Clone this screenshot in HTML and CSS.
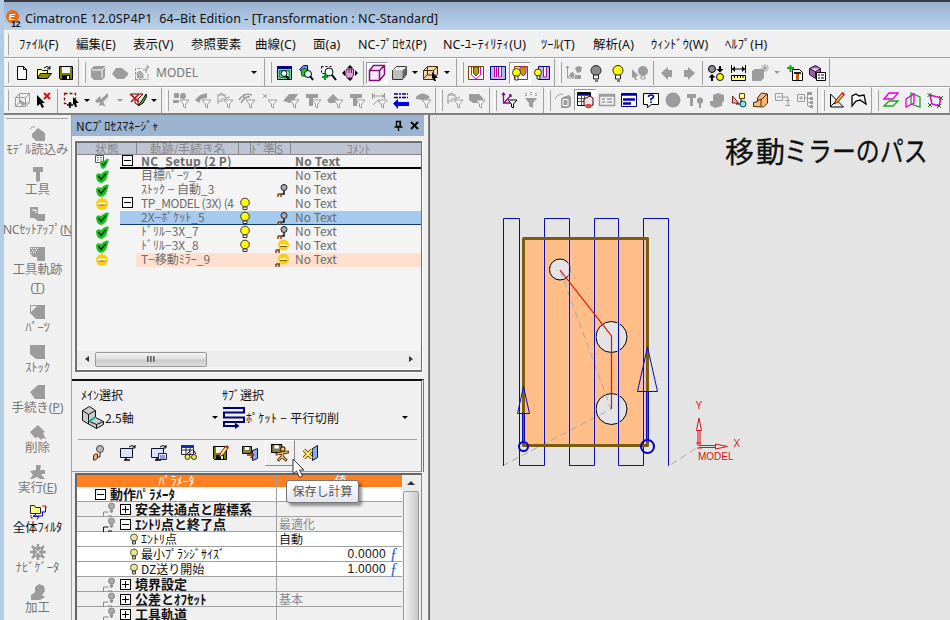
FILE: index.html
```html
<!DOCTYPE html>
<html lang="ja">
<head>
<meta charset="utf-8">
<title>CimatronE 12.0SP4P1</title>
<link rel="stylesheet" href="styles.css">
</head>
<body>
<svg class="sprite" aria-hidden="true">
<defs>
<g id="funnel"><path d="M8 9h9l-3.500 4v4l-2-1v-3z" fill="#fafafa" stroke="#9c9c9c"/></g>
<symbol id="new" viewBox="0 0 18 18"><path d="M4.500 2.500h6l3 3v10h-9zM10.500 2.500v3h3" fill="#fff" stroke="#000"/></symbol>
<symbol id="open" viewBox="0 0 18 18"><path d="M2.500 14.500v-9h4l1 1h5v3" fill="#ffff9c" stroke="#000"/><path d="M2.500 14.500l3-5h11l-4 5z" fill="#8c8c00" stroke="#000"/><path d="M9 4q3-3 6 0m0-2v3h-3" fill="none" stroke="#000"/></symbol>
<symbol id="save" viewBox="0 0 18 18"><path d="M2.500 2.500h13v13h-12l-1-1z" fill="#808000" stroke="#000"/><path d="M5 3h8v6H5z" fill="#f4f4f4"/><path d="M5 11h8v4H5z" fill="#000"/><path d="M10 12h2v3h-2z" fill="#fff"/></symbol>
<symbol id="gbox" viewBox="0 0 18 18"><path d="M2 5l3-3h11v11l-3 3H5l-3-3z" fill="#9c9c9c"/><path d="M6 6h7v8M13 6l3-3M6 6H3" stroke="#fff" fill="none"/></symbol>
<symbol id="ghex" viewBox="0 0 18 18"><path d="M1 10l4-6h6l6 5v2l-4 4H6z" fill="#9c9c9c"/></symbol>
<symbol id="gframe" viewBox="0 0 18 18"><path d="M2.500 15V4.500H9M2 15.500h13V10" stroke="#9c9c9c" fill="none" stroke-dasharray="3 1"/><path d="M4 9l3-2 3 3v4H5zM10 6h5M13 3v6M14 1l2 2-2 2" stroke="#9c9c9c" fill="#b0b0b0"/></symbol>
<symbol id="zwin" viewBox="0 0 18 18"><path d="M2.500 2.500h14v13h-14z" fill="#fff" stroke="#000080"/><path d="M2 2h15v3H2z" fill="#000080"/><path d="M4.500 6.500h10v7h-10z" fill="none" stroke="#00a050" stroke-width="2"/><circle cx="9" cy="9.500" r="3" fill="#dff" stroke="#000"/><path d="M11 12l3 3" stroke="#000" stroke-width="2"/></symbol>
<symbol id="zobj" viewBox="0 0 18 18"><path d="M2.500 5.500l4-4h4v6h-6z" fill="#8888ff" stroke="#000080"/><path d="M4 6l4-2 4 4-3 4H5z" fill="#20d020" stroke="#006000"/><circle cx="11" cy="10" r="3.500" fill="#dff" stroke="#000"/><path d="M13 12l3 4" stroke="#000" stroke-width="2"/></symbol>
<symbol id="zplus" viewBox="0 0 18 18"><path d="M2.500 2.500h10v7h-10z" fill="none" stroke="#000" stroke-dasharray="2 2"/><circle cx="10" cy="8" r="4" fill="#eff" stroke="#000"/><path d="M13 11l4 5" stroke="#000" stroke-width="2"/><path d="M3 13h6M6 10v6" stroke="#00a020" stroke-width="2"/></symbol>
<symbol id="pan" viewBox="0 0 18 18"><path d="M9 1l3 3H6zM9 17l3-3H6zM1 9l3-3v6zM17 9l-3-3v6z" fill="#000"/><path d="M5.500 5h7v6l-2 3h-4l-2-3z" fill="#e6a0d8" stroke="#602060"/><path d="M8 4v5M10.500 4v5" stroke="#602060"/></symbol>
<symbol id="cubew" viewBox="0 0 18 18"><path d="M1.500 6.500l4-5h11v9l-5 6h-10zM1.500 6.500h10v10M11.500 6.500l5-5" fill="#ffe8ff" stroke="#7c1080" stroke-width="1.500"/></symbol>
<symbol id="cubeg" viewBox="0 0 18 18"><path d="M2.500 6.500l4-4h10v8l-4 5h-10z" fill="#bdbdbd" stroke="#333"/><path d="M3 6l4-3h9l-4 3z" fill="#eee"/><path d="M12.500 7v8l4-5V3z" fill="#666"/></symbol>
<symbol id="cubeo" viewBox="0 0 18 18"><path d="M1.500 6.500l4-4h10v8l-4 5h-10zM1.500 6.500h10v9M11.500 6.500l4-4M5.500 3v8h9M5 11l-4 4" fill="#f5d8b0" stroke="#4c2800"/><path d="M10 8l6 6h-3l1 3-2 0-1-3-1 1z" fill="#000"/></symbol>
<symbol id="tool1" viewBox="0 0 18 18"><path d="M1.500 2.500h15v13h-15z" fill="#fff" stroke="#804000"/><path d="M4.500 3v8l4.500 4 4.500-4V3" fill="none" stroke="#e000e0"/><path d="M6.500 3h5v6l-2.500 3-2.500-3z" fill="#b8a000" stroke="#504000"/></symbol>
<symbol id="tool2" viewBox="0 0 18 18"><path d="M1.500 2.500h15v13h-15z" fill="#b8b8ff" stroke="#000080"/><path d="M5 3h8v11H5z" fill="#fff"/><path d="M5.500 3v10h2V3M9.500 3v10h3V3" fill="none" stroke="#c000a0"/></symbol>
<symbol id="tool3" viewBox="0 0 18 18"><path d="M3.500 2.500h13v13h-13z" fill="#fff" stroke="#804000"/><path d="M9 3v6l3 3 3-3V3z" fill="#b8a000" stroke="#e000e0"/><circle cx="5.500" cy="8.500" r="4" fill="#ff0" stroke="#333"/><path d="M4 12h3v4H4z" fill="#fff" stroke="#333"/></symbol>
<symbol id="tool4" viewBox="0 0 18 18"><path d="M5.500 2.500h11v13h-11z" fill="#b8b8ff" stroke="#000080"/><path d="M10.500 3v10h3V3" fill="#fff" stroke="#c000a0"/><circle cx="5" cy="8.500" r="3.500" fill="#ff0" stroke="#333"/><path d="M4 12h3v3H4z" fill="#fff" stroke="#333"/></symbol>
<symbol id="gaxis" viewBox="0 0 18 18"><path d="M2.500 2v12h9M1 4l1.500-2L4 4M3 13l5-5" stroke="#9c9c9c" fill="none"/><path d="M10 4l3-2 4 1-1 5-4 1z" fill="#9c9c9c"/><circle cx="7" cy="11" r="2.500" fill="#9c9c9c"/><path d="M10 11h6v4h-6z" fill="#9c9c9c"/></symbol>
<symbol id="bulbg" viewBox="0 0 18 18"><circle cx="9" cy="6.500" r="5" fill="#8c8c8c" stroke="#222"/><path d="M6.500 11h5v4h-5z" fill="#eee" stroke="#222"/><path d="M8 17h3" stroke="#000"/></symbol>
<symbol id="bulby" viewBox="0 0 18 18"><circle cx="9" cy="6.500" r="5" fill="#ff0" stroke="#222"/><path d="M6.500 11h5v4h-5z" fill="#fff" stroke="#222"/><path d="M8 17h3" stroke="#000"/></symbol>
<symbol id="gbulbs" viewBox="0 0 18 18"><circle cx="12" cy="7" r="5" fill="#9c9c9c"/><path d="M10 12h4v3h-4z" fill="none" stroke="#9c9c9c"/><path d="M1 5l7 7H5l1 4-2 0-1-3-2 1z" fill="#9c9c9c"/></symbol>
<symbol id="gleft" viewBox="0 0 18 18"><path d="M3 9l7-6v3h4v7h-4v3z" fill="#9c9c9c"/></symbol>
<symbol id="gright" viewBox="0 0 18 18"><path d="M15 9L8 3v3H4v7h4v3z" fill="#9c9c9c"/></symbol>
<symbol id="swap" viewBox="0 0 18 18"><circle cx="5" cy="5" r="3.500" fill="#909090" stroke="#000"/><circle cx="13" cy="13" r="3.500" fill="#ff0" stroke="#000"/><path d="M13 2v3M5 13v4" stroke="#000" stroke-width="2"/><path d="M9.500 5h7L13 8.500zM1.500 13.500h7L5 10z" fill="#000"/></symbol>
<symbol id="ruler" viewBox="0 0 18 18"><path d="M2.500 1v8M16.500 1v8M3 5h13" stroke="#000"/><path d="M3 5l3-3v6zM16 5l-3-3v6z" fill="#000"/><path d="M2.500 11.500h14v5h-14z" fill="#ff8" stroke="#000"/><path d="M5.500 12v2M8.500 12v2M11.500 12v2M14 12v2" stroke="#000"/></symbol>
<symbol id="gburst" viewBox="0 0 18 18"><path d="M1 7l3-2h9v9l-3 3H1z" fill="#9c9c9c"/><path d="M11 1l6 6M17 1l-6 6M14 0v8M10 4h8" stroke="#9c9c9c"/></symbol>
<symbol id="addt" viewBox="0 0 18 18"><path d="M6.500 5.500h7l3 3v8h-10z" fill="#fff" stroke="#000"/><path d="M8 8h7v2H8z" fill="#222"/><path d="M10 10h3v6h-3z" fill="#c86000"/><path d="M1 4h7M4.500 1v7" stroke="#00b020" stroke-width="2"/></symbol>
<symbol id="pcube" viewBox="0 0 18 18"><path d="M1.500 4.500l6-3 5 3v6l-5 4-6-4zM1.500 4.500l6 3 5-3M7.500 7.500v7" fill="#9c60a8" stroke="#301040"/><path d="M8.500 8.500h9v8h-9z" fill="#fff" stroke="#000"/><path d="M10 11h2m1 0h3m-6 3h2m1 0h3" stroke="#000"/></symbol>
<symbol id="gwire" viewBox="0 0 18 18"><path d="M2.500 6.500l4-4h10v9l-4 4h-10zM2.500 6.500h10v9M12.500 6.500l4-4M6.500 3v9h10M6 12l-3 3" fill="none" stroke="#9c9c9c"/><path d="M6 8l7 5-4 2z" fill="#9c9c9c"/></symbol>
<symbol id="nosel" viewBox="0 0 18 18"><path d="M2 4l8 8H7l2 4-2 1-2-4-3 2z" fill="#000"/><path d="M9 2l6 6M15 2L9 8" stroke="#d01020" stroke-width="2"/></symbol>
<symbol id="selbox" viewBox="0 0 18 18"><path d="M2.500 2.500h11v10h-11z" fill="none" stroke="#7c1010" stroke-width="1.300" stroke-dasharray="3 2"/><path d="M11 6l6 6h-3l1 4-2 0-1-3-1 1z" fill="#000"/><path d="M5 14h6M8 11v6" stroke="#000" stroke-width="1.600"/></symbol>
<symbol id="gbrush" viewBox="0 0 18 18"><path d="M1 10l5-5 1 3 7-6v4l-5 5 3 5-4-2-3 1 1-4-3 1z" fill="#9c9c9c"/></symbol>
<symbol id="nofilt" viewBox="0 0 18 18"><path d="M2 3h12l-5 5v6l-3-2V8z" fill="#f0dede" stroke="#600"/><path d="M1 3l9 8M10 3L2 11" stroke="#c01018" stroke-width="1.600"/><path d="M9 15l5-7 3-5 1 2-4 7z" fill="#40c040" stroke="#000"/></symbol>
<symbol id="f1" viewBox="0 0 18 18"><path d="M2 2h5v5H2zM1 9h6v3H1z" fill="#9c9c9c"/><circle cx="11" cy="5" r="3" fill="#9c9c9c"/><use href="#funnel"/></symbol>
<symbol id="f2" viewBox="0 0 18 18"><path d="M1 9l5-5 7-2v5l-6 1-2 4z" fill="#9c9c9c"/><use href="#funnel"/></symbol>
<symbol id="f3" viewBox="0 0 18 18"><path d="M2 13V4l4-2 4 5 4-1M2 4h8M5 8h6M1 10h6" fill="none" stroke="#9c9c9c"/><use href="#funnel"/></symbol>
<symbol id="f4" viewBox="0 0 18 18"><path d="M1 9q5-8 13-5M3 12q4-7 9-6M6 3v6" fill="none" stroke="#9c9c9c" stroke-width="1.500"/><use href="#funnel"/></symbol>
<symbol id="f5" viewBox="0 0 18 18"><path d="M3 3l4 4M7 3L3 7" fill="none" stroke="#9c9c9c"/><use href="#funnel"/></symbol>
<symbol id="f6" viewBox="0 0 18 18"><path d="M1 10l6-7h9l-4 6-4 3z" fill="#9c9c9c"/><use href="#funnel"/></symbol>
<symbol id="f7" viewBox="0 0 18 18"><path d="M2 3h12v4H9v8H5V7H2z" fill="#9c9c9c"/><use href="#funnel"/></symbol>
<symbol id="f8" viewBox="0 0 18 18"><path d="M1 9l6-6 6 6-5 3H3z" fill="#9c9c9c"/><use href="#funnel"/></symbol>
<symbol id="f9" viewBox="0 0 18 18"><path d="M2.500 2v6M14.500 2v6M3 5h11M5 3L3 5l2 2M12 3l2 2-2 2M3 14l5-5 2 3" fill="none" stroke="#9c9c9c"/><use href="#funnel"/></symbol>
<symbol id="f11" viewBox="0 0 18 18"><path d="M1 3h10l4 4v5H5l-4-3z" fill="#9c9c9c"/><use href="#funnel"/></symbol>
<symbol id="barrow" viewBox="0 0 18 18"><path d="M2 3h14M2 6.500h14" stroke="#000060" stroke-width="1.500" stroke-dasharray="4 1 2 1"/><path d="M1 12.500L6 8v3h11v4H6v3z" fill="#0000e0"/></symbol>
<symbol id="f10" viewBox="0 0 18 18"><path d="M2 6q6-7 14 0l-2 2-5 1-7-1z" fill="#9c9c9c"/><use href="#funnel"/></symbol>
<symbol id="faxis" viewBox="0 0 18 18"><path d="M3.500 2v10h7M4 12l7-8M2 4l1.500-2L5 4M9 4h2v2" fill="none" stroke="#7c1080" stroke-width="1.300"/><path d="M8 9h9l-3.500 4v4l-2-1v-3z" fill="#fff" stroke="#000"/></symbol>
<symbol id="gf" viewBox="0 0 18 18"><path d="M3 7h12l-4 5v5l-4-2v-3z" fill="#9c9c9c"/><path d="M4 2v3M9 1v4M14 2v3" stroke="#9c9c9c" stroke-dasharray="1 1" stroke-width="2"/></symbol>
<symbol id="gpage" viewBox="0 0 18 18"><path d="M1 8q2-5 8-5" fill="none" stroke="#9c9c9c"/><path d="M9 6l6-2 2 2v9l-3 2H7V8z" fill="#9c9c9c"/><path d="M9 8.500h5v6H9z" fill="none" stroke="#fff"/></symbol>
<symbol id="calc" viewBox="0 0 18 18"><path d="M1.500 1.500h13v13h-13z" fill="#fff" stroke="#000"/><path d="M2 4.500h12M2 7.500h12M2 10.500h12M5.500 5v9M8.500 5v9" stroke="#555"/><path d="M2 2h12v2H2z" fill="#000080"/><path d="M8 8l6-3 3 2v7l-5 3-4-3z" fill="#f4e0e0" stroke="#300"/><path d="M10 13h5v4h-5z" fill="#d05050"/></symbol>
<symbol id="glist" viewBox="0 0 18 18"><path d="M1.500 3.500h15v11h-15zM2 5h14M4 8h3m2 0h5M4 11h3m2 0h5" fill="none" stroke="#9c9c9c" stroke-width="1.500"/></symbol>
<symbol id="blist" viewBox="0 0 18 18"><path d="M1.500 2.500h15v13h-15z" fill="#fff" stroke="#000080"/><path d="M2 3.500h14M3 8.500h12M3 12.500h8" stroke="#0000b0" stroke-width="2.400"/></symbol>
<symbol id="help" viewBox="0 0 18 18"><path d="M1.500 2.500h15v11h-7l-4 3v-3h-4z" fill="#fffff0" stroke="#000"/><path d="M6.500 6q0-2 2.500-2t2.500 1.800q0 1.200-2.500 2.200v1.500M9 10.500v1.500" fill="none" stroke="#0000c0" stroke-width="1.700"/></symbol>
<symbol id="gball" viewBox="0 0 18 18"><circle cx="9" cy="9" r="7.500" fill="#9c9c9c"/></symbol>
<symbol id="gtool" viewBox="0 0 18 18"><path d="M1 3h9v4H7v8H4V7H1zM11 8l3-2 3 2v3l-2 2v4h-2v-4l-2-2z" fill="#9c9c9c"/></symbol>
<symbol id="gblob" viewBox="0 0 18 18"><path d="M2 10h3V4l5-2 6 2v6l-2 2v3l-7 2-5-3z" fill="#9c9c9c"/></symbol>
<symbol id="shapes" viewBox="0 0 18 18"><path d="M2.500 5v7h6z" fill="#f8b0b0" stroke="#702020"/><path d="M9.500 2.500h5v5h-5z" fill="#ff9" stroke="#554400"/><circle cx="13" cy="13" r="3" fill="#90e0e8" stroke="#004050"/><path d="M6 13h4M11 8v3" stroke="#000"/></symbol>
<symbol id="step" viewBox="0 0 18 18"><path d="M1.500 15.500v-4l4-1V7l4-5 6 1v9l-4 4z" fill="#f8b878" stroke="#4c2800"/><path d="M9 15V9l6-6M5 10l4-2" stroke="#4c2800" fill="none"/></symbol>
<symbol id="gt1" viewBox="0 0 18 18"><path d="M1.500 2.500h7v7h-7zM3 6h4M8 6h6v8M11 14.500h5M11 9.500h5" fill="none" stroke="#9c9c9c"/></symbol>
<symbol id="gt2" viewBox="0 0 18 18"><path d="M1.500 3.500h7v7h-7zM3 7h4M5 5v4M11.500 2v13M8 7h4M12 7.500h2M12 11.500h2M12 15.500h2" fill="none" stroke="#9c9c9c"/><path d="M11 1h5v3h-5zM14 6h3v3h-3zM14 10h3v3h-3zM14 14h3v3h-3z" fill="#9c9c9c"/></symbol>
<symbol id="sketch" viewBox="0 0 18 18"><path d="M2.500 3v13h13zM2 16l9-9" fill="none" stroke="#000"/><path d="M6 13l2-4 6-7 2 2-6 7z" fill="#f0b040" stroke="#602000"/><path d="M13 2l2-1 2 2-1 2z" fill="#d03030"/></symbol>
<symbol id="curve" viewBox="0 0 18 18"><path d="M2 15V5l4-2 3 2 5-1 2 9-6-4-4 1z" fill="#fff" stroke="#000" stroke-width="1.300"/></symbol>
<symbol id="planes" viewBox="0 0 18 18"><path d="M2 8l5-6h9l-5 6z" fill="none" stroke="#e000e0" stroke-width="1.300"/><path d="M2 15l5-5h9l-5 5z" fill="#e0ffe0" stroke="#20a020" stroke-width="1.300"/></symbol>
<symbol id="pl2" viewBox="0 0 18 18"><path d="M7 2l9 4v10l-9-3z" fill="none" stroke="#20a020" stroke-width="1.300"/><path d="M2 8l8-5v9l-8 4z" fill="none" stroke="#e000e0" stroke-width="1.300"/></symbol>
<symbol id="pl3" viewBox="0 0 18 18"><path d="M4 4l11 3-2 8-7-2z" fill="none" stroke="#e000e0" stroke-width="1.500"/><path d="M1.500 2l4 4M5.500 2l-4 4M13 5l4 4M17 5l-4 4M11 13l4 4M15 13l-4 4M2 12l4 4M6 12l-4 4" stroke="#206020"/></symbol>
<symbol id="ok" viewBox="0 0 14 14"><path d="M1 6q2-3 5-1 5-5 8-3-1 3-2 6-1 5-6 6-5-1-5-8z" fill="#1cc51c"/><path d="M3.500 7l2.500 3.500 5-6" fill="none" stroke="#032" stroke-width="1.500"/></symbol>
<symbol id="okroot" viewBox="0 0 14 14"><path d="M.5.500h8v7h-8z" fill="#fff" stroke="#555"/><path d="M2 2.500h2m1 0h2M2 5h2m1 0h2" stroke="#777"/><path d="M5 7q2-2 4-1 3-3 5-2-1 3-2 5-1 4-4 5-3-1-3-7z" fill="#1cc51c"/><path d="M7 8.500l1.500 2 3-4" fill="none" stroke="#032" stroke-width="1.200"/></symbol>
<symbol id="minus" viewBox="0 0 14 14"><circle cx="7" cy="7" r="6" fill="#f8ce16"/><path d="M3 7h8" stroke="#fff" stroke-width="2.500"/><path d="M3.500 8h7" stroke="#806000"/></symbol>
<symbol id="lamp" viewBox="0 0 14 14"><circle cx="7" cy="5.500" r="4.300" fill="#ff0" stroke="#333"/><path d="M5 10h4v2.500H5z" fill="#fff" stroke="#333"/></symbol>
<symbol id="mill" viewBox="0 0 14 14"><circle cx="9" cy="4.500" r="3" fill="#aab" stroke="#222"/><path d="M9 8v3H7" stroke="#111" fill="none" stroke-width="1.500"/><path d="M3 11h4M3 14v-3M6 14v-3" stroke="#804010" stroke-width="1.500"/></symbol>
<symbol id="millm" viewBox="0 0 14 14"><circle cx="8.500" cy="6" r="5.500" fill="#f8ce16"/><path d="M5 6.500h7" stroke="#fff" stroke-width="2"/><path d="M5 7.500h7" stroke="#806000"/><path d="M1 11h4M1 14v-3M4 14v-3" stroke="#804010" stroke-width="1.500"/></symbol>
<symbol id="drill" viewBox="0 0 18 18"><circle cx="11" cy="5" r="3.500" fill="#bbb" stroke="#444"/><path d="M11 9v4H8" stroke="#222" fill="none"/><path d="M4.500 11.500l2-1.500h2v4l-2 2h-2z" fill="#f0b070" stroke="#522000"/></symbol>
<symbol id="bolt" viewBox="0 0 16 15"><path d="M1.500 15v-5h5M6 14h4" fill="none" stroke="currentColor"/><circle cx="9.500" cy="4" r="3" fill="#aaa" stroke="#888"/><path d="M8 8h3l-1.500 3z" fill="#999" stroke="#888"/></symbol>
<symbol id="slamp" viewBox="0 0 10 12"><circle cx="5" cy="4.500" r="3.500" fill="#ece68a" stroke="#555"/><path d="M3.500 8h3v3h-3z" fill="#cc8" stroke="#444"/></symbol>
<symbol id="mon" viewBox="0 0 18 18"><path d="M1.500 4.500h12v9h-12z" fill="#d8e4ff" stroke="#112"/><path d="M5 16h6M7 14v2" stroke="#000" stroke-width="1.500"/><path d="M10 3q3-3 6 0M16 1v3h-3" fill="none" stroke="#000"/></symbol>
<symbol id="mon2" viewBox="0 0 18 18"><use href="#mon"/><path d="M8.500 9.500h8v6h-8z" fill="#e8e8ff" stroke="#224"/><path d="M10 12h5m-5 2h5" stroke="#44a"/></symbol>
<symbol id="tabg" viewBox="0 0 18 18"><path d="M1.500 1.500h12v9h-12zM2 6h11M6 2v8M10 2v8" fill="#fff" stroke="#224"/><path d="M1 1h13v3H1z" fill="#1030b0"/><path d="M7 10l3-3M16 10l-2-3" stroke="#000"/><circle cx="7.500" cy="13" r="2.500" fill="#ee3" stroke="#333"/><circle cx="14" cy="13" r="2.500" fill="#ee3" stroke="#333"/></symbol>
<symbol id="spen" viewBox="0 0 18 18"><use href="#save"/><path d="M8 13l2-5 5-6 2 2-5 7z" fill="#ffe090" stroke="#743000"/><path d="M14 3l2-2 2 2-1 2z" fill="#c22"/></symbol>
<symbol id="sexit" viewBox="0 0 18 18"><path d="M1.500 2.500h9v7h-9z" fill="#808040" stroke="#000"/><path d="M4 3h4v3H4z" fill="#fff"/><path d="M11.500 6.500l5-2v10l-5 2z" fill="#88aaf0" stroke="#113"/><path d="M6 11h6M9.500 8l3 3-3 3" stroke="#803010" fill="none" stroke-width="1.500"/></symbol>
<symbol id="srun" viewBox="0 0 18 18"><path d="M1.500 1.500h9v7h-9z" fill="#808040" stroke="#000"/><path d="M4 2h4v3H4z" fill="#fff"/><circle cx="11.500" cy="5.500" r="2" fill="#ffd080" stroke="#522000"/><path d="M5 10l6-1 6-1M11 8v4l4 4M11 12l-4 4" stroke="#522000" fill="none" stroke-width="2.600"/><path d="M6 10l5-1 5-1M11 8v4l3.500 3.500M11 12l-3.500 3.500" stroke="#ffd080" fill="none"/></symbol>
<symbol id="xexit" viewBox="0 0 18 18"><path d="M10.500 4.500l5-3v12l-5 3z" fill="#88aaf0" stroke="#113"/><path d="M2 6l8 8M10 6l-8 8" stroke="#553000" stroke-width="3.500"/><path d="M2 6l8 8M10 6l-8 8" stroke="#fe6" stroke-width="2"/></symbol>
<symbol id="s1" viewBox="0 0 18 18"><path d="M1 4q2-3 5-2" fill="none" stroke="#9c9c9c"/><path d="M3 9l6-6 7 5v8H7l-4-4z" fill="#9c9c9c"/></symbol>
<symbol id="s2" viewBox="0 0 18 18"><path d="M4 2h10v5h-3v9l-2 1-2-1V7H4z" fill="#9c9c9c"/></symbol>
<symbol id="s3" viewBox="0 0 18 18"><path d="M1 2h8v7h7v7H9l-4-3H1z" fill="#9c9c9c"/><path d="M3 5h4v3" fill="none" stroke="#fff"/></symbol>
<symbol id="s4" viewBox="0 0 18 18"><path d="M1 2h15v14h-8V12H4L1 8z" fill="#9c9c9c"/><path d="M2 3.500h7M3 5.500h6M2 7.500h5" stroke="#fff" stroke-dasharray="1 1"/></symbol>
<symbol id="s5" viewBox="0 0 18 18"><path d="M1 2h15v14H7L1 10z" fill="#9c9c9c"/><path d="M2 3h6L2 9z" fill="#eee"/></symbol>
<symbol id="s6" viewBox="0 0 18 18"><path d="M1 2h15v14H7L1 11z" fill="#9c9c9c"/></symbol>
<symbol id="s7" viewBox="0 0 18 18"><path d="M1 9l8-7h7v14H6z" fill="#9c9c9c"/></symbol>
<symbol id="s8" viewBox="0 0 18 18"><path d="M1 9l8-7 7 7-2 1 3 6-3-1-2 2-3-3-3 1z" fill="#9c9c9c"/></symbol>
<symbol id="s9" viewBox="0 0 18 18"><path d="M7 2h5l-1 5h5v4h-4l4 5h-5l-3-2-5 2H1l3-4-3-4 6-1z" fill="#9c9c9c"/></symbol>
<symbol id="s10" viewBox="0 0 18 18"><path d="M1.500 2.500h4l1 2h5v6h-10z" fill="#ffff80" stroke="#222"/><path d="M16.500 4v5h-4M13.500 9v4h-9M8 10l-4 3.500h6l-2 3" fill="none" stroke="#0000e0"/><path d="M13 3h4v2M2 12v3h2" stroke="#d00" fill="none"/></symbol>
<symbol id="s11" viewBox="0 0 18 18"><path d="M9 1v16M1 9h16M3 3l12 12M15 3L3 15" stroke="#9c9c9c" stroke-width="2.500"/><circle cx="9" cy="9" r="5.500" fill="#9c9c9c"/><path d="M6 6l6 6M12 6l-6 6" stroke="#eee"/></symbol>
<symbol id="s12" viewBox="0 0 18 18"><path d="M2 12l4-3V4l4-3 5 2 1 5-3 4 3 2-5 3H2z" fill="#9c9c9c"/></symbol>
</defs>
</svg>

<div class="window">
  <header class="titlebar">
    <svg class="logo" viewBox="0 0 18 18"><circle cx="8" cy="7.500" r="7" fill="#e86a18"/><text x="4" y="11.500" class="logo-e">E</text><text x="6.500" y="18" class="logo-n">12</text></svg>
    <span class="caption">CimatronE 12.0SP4P1&nbsp; 64–Bit Edition - [Transformation : NC-Standard]</span>
  </header>

  <nav class="menubar"><i class="grip"></i>
    <span>ﾌｧｲﾙ(F)</span><span>編集(E)</span><span>表示(V)</span><span>参照要素</span><span>曲線(C)</span><span>面(a)</span><span>NC-ﾌﾟﾛｾｽ(P)</span><span>NC-ﾕｰﾃｨﾘﾃｨ(U)</span><span>ﾂｰﾙ(T)</span><span>解析(A)</span><span>ｳｨﾝﾄﾞｳ(W)</span><span>ﾍﾙﾌﾟ(H)</span>
  </nav>

  <div class="toolrow">
    <div class="group first"><i class="grip"></i><svg><use href="#new"/></svg><svg><use href="#open"/></svg><svg><use href="#save"/></svg></div>
    <div class="group g-model"><i class="grip"></i><svg><use href="#gbox"/></svg><svg><use href="#ghex"/></svg><svg><use href="#gframe"/></svg><div class="combo"><span>MODEL</span><i class="caret"></i></div></div>
    <div class="group g-view"><i class="grip"></i><svg><use href="#zwin"/></svg><svg><use href="#zobj"/></svg><svg><use href="#zplus"/></svg><svg><use href="#pan"/></svg><i class="sep"></i><svg class="on"><use href="#cubew"/></svg><svg><use href="#cubeg"/></svg><i class="caret"></i><svg><use href="#cubeo"/></svg><i class="caret"></i></div>
    <div class="group g-tools"><i class="grip"></i><svg><use href="#tool1"/></svg><svg><use href="#tool2"/></svg><svg class="on"><use href="#tool3"/></svg><svg><use href="#tool4"/></svg></div>
    <div class="group g-hide"><i class="grip"></i><svg><use href="#gaxis"/></svg><svg><use href="#bulbg"/></svg><svg><use href="#bulby"/></svg><svg><use href="#gbulbs"/></svg><i class="sep"></i><svg><use href="#gleft"/></svg><svg><use href="#gright"/></svg><i class="sep"></i><svg><use href="#swap"/></svg><svg><use href="#ruler"/></svg><svg><use href="#gburst"/></svg><i class="caret dim"></i><svg><use href="#addt"/></svg><svg><use href="#pcube"/></svg></div>
  </div>

  <div class="toolrow low">
    <div class="group first r-sel"><i class="grip"></i><svg><use href="#gwire"/></svg><svg><use href="#nosel"/></svg><i class="sep"></i><svg><use href="#selbox"/></svg><i class="caret"></i><svg><use href="#gbrush"/></svg><i class="caret dim"></i><svg><use href="#nofilt"/></svg><i class="caret"></i></div>
    <div class="group r-wide"><i class="grip"></i><svg><use href="#f1"/></svg><svg><use href="#f2"/></svg><svg><use href="#f3"/></svg><svg><use href="#f4"/></svg><svg><use href="#f5"/></svg><svg><use href="#f6"/></svg><svg><use href="#f7"/></svg><svg><use href="#f8"/></svg><svg><use href="#f7"/></svg><svg><use href="#f9"/></svg><svg><use href="#barrow"/></svg><svg><use href="#f10"/></svg></div>
    <div class="group r-pair"><i class="grip"></i><svg><use href="#f3"/></svg><svg><use href="#f11"/></svg></div>
    <div class="group r-pair"><i class="grip"></i><svg><use href="#faxis"/></svg><svg><use href="#gf"/></svg></div>
    <div class="group r-wide"><i class="grip"></i><svg><use href="#gpage"/></svg><svg class="on"><use href="#calc"/></svg><svg><use href="#glist"/></svg><svg><use href="#blist"/></svg><svg><use href="#help"/></svg><svg><use href="#gball"/></svg><svg><use href="#gtool"/></svg><svg><use href="#gblob"/></svg><svg><use href="#shapes"/></svg><svg><use href="#step"/></svg><svg><use href="#gt1"/></svg><svg><use href="#gt2"/></svg></div>
    <div class="group r-pair"><i class="grip"></i><svg><use href="#sketch"/></svg><svg><use href="#curve"/></svg></div>
    <div class="group r-planes"><i class="grip"></i><svg><use href="#planes"/></svg><svg><use href="#pl2"/></svg><svg><use href="#pl3"/></svg></div>
  </div>

  <main class="work">
    <aside class="side">
      <div class="item"><svg><use href="#s1"/></svg><span>ﾓﾃﾞﾙ読込み</span></div>
      <div class="item"><svg><use href="#s2"/></svg><span>工具</span></div>
      <div class="item"><svg><use href="#s3"/></svg><span class="long">NCｾｯﾄｱｯﾌﾟ(<u>N</u></span></div>
      <div class="item tall"><svg><use href="#s4"/></svg><span>工具軌跡<br>(<u>T</u>)</span></div>
      <div class="item"><svg><use href="#s5"/></svg><span>ﾊﾟｰﾂ</span></div>
      <div class="item"><svg><use href="#s6"/></svg><span>ｽﾄｯｸ</span></div>
      <div class="item"><svg><use href="#s7"/></svg><span>手続き(<u>P</u>)</span></div>
      <div class="item"><svg><use href="#s8"/></svg><span>削除</span></div>
      <div class="item"><svg><use href="#s9"/></svg><span>実行(<u>E</u>)</span></div>
      <div class="item live"><svg><use href="#s10"/></svg><span>全体ﾌｨﾙﾀ</span></div>
      <div class="item"><svg><use href="#s11"/></svg><span>ﾅﾋﾞｹﾞｰﾀ</span></div>
      <div class="item"><svg><use href="#s12"/></svg><span>加工</span></div>
    </aside>

    <section class="panel">
      <div class="panel-title"><span>NCﾌﾟﾛｾｽﾏﾈｰｼﾞｬ</span>
        <svg viewBox="0 0 30 14"><path d="M4.500 2.500h4v5h-4zM8 2v6M2.500 8h8M6.500 8v4" fill="none" stroke="#000" stroke-width="1.300"/><path d="M19 3l7 7M26 3l-7 7" stroke="#000" stroke-width="1.800"/></svg>
      </div>
      <div class="tree">
        <div class="row head"><span class="st">状態</span><span></span><span class="nm">軌跡/手続き名</span><span></span><span>ﾄﾞ準</span><span>S</span><span class="cm">ｺﾒﾝﾄ</span></div>
        <div class="row root"><span class="st"><svg><use href="#okroot"/></svg></span><span><b class="box minus"></b></span><span class="nm">NC_Setup (2 P)</span><span></span><span></span><span></span><span class="cm">No Text</span></div>
        <div class="row"><span class="st"><svg><use href="#ok"/></svg></span><span></span><span class="nm">目標ﾊﾟｰﾂ_2</span><span></span><span></span><span></span><span class="cm">No Text</span></div>
        <div class="row"><span class="st"><svg><use href="#ok"/></svg></span><span></span><span class="nm">ｽﾄｯｸ − 自動_3</span><span></span><span></span><span><svg><use href="#mill"/></svg></span><span class="cm">No Text</span></div>
        <div class="row"><span class="st"><svg><use href="#minus"/></svg></span><span><b class="box minus"></b></span><span class="nm tight">TP_MODEL (3X) (4</span><span><svg><use href="#lamp"/></svg></span><span></span><span></span><span class="cm">No Text</span></div>
        <div class="row sel"><span class="st"><svg><use href="#ok"/></svg></span><span></span><span class="nm">2X−ﾎﾟｹｯﾄ_5</span><span><svg><use href="#lamp"/></svg></span><span></span><span><svg><use href="#mill"/></svg></span><span class="cm">No Text</span></div>
        <div class="row"><span class="st"><svg><use href="#ok"/></svg></span><span></span><span class="nm">ﾄﾞﾘﾙ−3X_7</span><span><svg><use href="#lamp"/></svg></span><span></span><span><svg><use href="#mill"/></svg></span><span class="cm">No Text</span></div>
        <div class="row"><span class="st"><svg><use href="#ok"/></svg></span><span></span><span class="nm">ﾄﾞﾘﾙ−3X_8</span><span><svg><use href="#lamp"/></svg></span><span></span><span><svg><use href="#millm"/></svg></span><span class="cm">No Text</span></div>
        <div class="row cur"><span class="st"><svg><use href="#minus"/></svg></span><span></span><span class="nm">T−移動ﾐﾗｰ_9</span><span></span><span></span><span><svg><use href="#millm"/></svg></span><span class="cm">No Text</span></div>
        <div class="hscroll"><i class="la"></i><div class="thumb"><i></i><i></i><i></i></div><i class="ra"></i></div>
      </div>

      <div class="setup">
        <div class="choice">
          <div class="pick main"><label>ﾒｲﾝ選択</label><div class="value"><svg viewBox="0 0 24 24"><path d="M1.500 5.500l7-4 6 4v7l8 4v3l-7 4-14-8z" fill="#ccc" stroke="#111"/><path d="M1.500 5.500l6 4v9.500M7.500 9.500l7-4M15.500 23.500v-4l7-3M7.500 16l8 3.500" fill="none" stroke="#111"/><path d="M8 16.500l6.500-4.500" stroke="#10b090" stroke-width="2"/></svg><span>2.5軸</span><i class="caret"></i></div></div>
          <div class="pick sub"><label>ｻﾌﾞ選択</label><div class="value"><svg viewBox="0 0 24 24"><path d="M1 3h21v4.500H2v5h20v4.500H2v4h13" fill="none" stroke="#00007c" stroke-width="2"/><path d="M13 17.500l4.500 3.500-4.500 3z" fill="#00007c"/></svg><span>ﾎﾟｹｯﾄ − 平行切削</span><i class="caret"></i></div></div>
        </div>
        <div class="actions"><svg><use href="#drill"/></svg><svg><use href="#mon"/></svg><svg><use href="#mon2"/></svg><svg><use href="#tabg"/></svg><svg><use href="#spen"/></svg><svg><use href="#sexit"/></svg><svg class="hover"><use href="#srun"/></svg><svg><use href="#xexit"/></svg></div>
        <svg class="pointer" viewBox="0 0 13 20"><path d="M1 1v15l3.500-3 3 6.500 3-1.500-3-6H12z" fill="#fff" stroke="#334"/></svg>
        <div class="tip">保存し計算</div>
      </div>

      <div class="params">
        <div class="grid">
          <div class="p head"><span>ﾊﾟﾗﾒｰﾀ</span><span>値</span></div>
          <div class="p top"><span class="l0"><b class="box minus"></b><strong>動作ﾊﾟﾗﾒｰﾀ</strong></span><span></span></div>
          <div class="p grp"><span class="l1"><svg><use href="#bolt"/></svg><b class="box plus"></b><strong>安全共通点と座標系</strong></span><span></span></div>
          <div class="p grp"><span class="l1 ink"><svg><use href="#bolt"/></svg><b class="box minus"></b><strong>ｴﾝﾄﾘ点と終了点</strong></span><span>最適化</span></div>
          <div class="p"><span class="l2"><svg><use href="#slamp"/></svg>ｴﾝﾄﾘ点</span><span>自動</span></div>
          <div class="p"><span class="l2"><svg><use href="#slamp"/></svg>最小ﾌﾟﾗﾝｼﾞｻｲｽﾞ</span><span class="num"><span>0.0000</span><em>ƒ</em></span></div>
          <div class="p act"><span class="l2"><svg><use href="#slamp"/></svg>DZ送り開始</span><span class="num"><span>1.0000</span><em>ƒ</em></span></div>
          <div class="p grp"><span class="l1"><svg><use href="#bolt"/></svg><b class="box plus"></b><strong>境界設定</strong></span><span></span></div>
          <div class="p grp"><span class="l1"><svg><use href="#bolt"/></svg><b class="box plus"></b><strong>公差とｵﾌｾｯﾄ</strong></span><span>基本</span></div>
          <div class="p grp"><span class="l1"><svg><use href="#bolt"/></svg><b class="box plus"></b><strong>工具軌道</strong></span><span></span></div>
        </div>
        <div class="vscroll"><i></i><div></div></div>
      </div>
    </section>

    <section class="canvas">
      <h1><span class="kanji">移動</span><span class="kana">ミラーのパス</span></h1>
      <svg class="cad" viewBox="430 115 520 505">
        <path d="M523.500 238.500h124v207h-124z" fill="#ffbe88"/>
        <g fill="#e4e4e4" stroke="#000"><circle cx="560" cy="269.500" r="10.500"/><circle cx="611.500" cy="337" r="15.500"/><circle cx="611.500" cy="409" r="15.500"/></g>
        <path d="M544.500 240v204M569.500 240v204M594.500 240v204M618.500 240v204M643.500 240v204" stroke="#e8ccee" stroke-width="3" opacity=".6"/>
        <path d="M560 270L611 409 504 465M671 464.500L698 447" stroke="#a8a8a8" fill="none" stroke-dasharray="7 4"/>
        <path d="M503.500 466V218.500H519.500V465.500H544.500V218.500H569.500V465.500H594.500V218.500H618.500V465.500H643.500V218.500H668.500V466" fill="none" stroke="#0c0cb4"/>
        <path d="M523.500 238.500h124v207h-124z" fill="none" stroke="#7b5c10" stroke-width="3" stroke-linejoin="round"/>
        <path d="M560 270L611.500 336V409" fill="none" stroke="#e01010" stroke-width="1.200"/>
        <g fill="none" stroke="#0c0cb4"><path d="M523.500 386.500l6 27h-12zM522.500 413v28M524.500 413v28M647.500 347l10 44.500h-20zM646.500 391v50M648.500 391v50"/><g stroke-width="2" stroke="#0000c8"><circle cx="523.500" cy="446.500" r="4.500"/><circle cx="647.500" cy="446.500" r="6.500"/></g></g>
        <path d="M698 446v-15M700 446v-15M696.500 430.500L699 418l2.500 12.500zM699 445.500h16M699 447.500h16M715.500 444v5l12-2.500zM696 443h5M697 448h5" fill="none" stroke="#d81414"/>
        <g class="axis"><text x="695.500" y="409">Y</text><text x="733.500" y="447">X</text><text x="698" y="460">MODEL</text></g>
      </svg>
    </section>
  </main>
</div>
</body>
</html>
```
FILE: styles.css
```css
* { box-sizing: border-box; }
body { margin: 0; overflow: hidden; font-family: "Noto Sans", "Noto Sans CJK JP", sans-serif; font-size: 12px; color: #111; }
.sprite { position: absolute; width: 0; height: 0; }
i { display: block; flex: none; }
svg { flex: none; }
.window { width: 950px; height: 620px; background: #f0f0f0; border-left: 4px solid #b4cbe6; display: flex; flex-direction: column; overflow: hidden; }
.titlebar { height: 30px; flex: none; margin-left: -4px; border-top: 2px solid #353a44; background: linear-gradient(#98b1ce, #bad2ec); display: flex; align-items: center; padding: 4px 0 0 5px; }
.logo { width: 17px; height: 18px; overflow: visible; }
.logo-e { font: italic bold 10px "Liberation Sans"; fill: #fff; }
.logo-n { font: bold 9px "Liberation Sans"; fill: #111; }
.caption { margin-left: 3px; white-space: nowrap; font-size: 12.5px; letter-spacing: .09px; }

.grip { width: 3px; height: 21px; border-left: 1px solid #fff; border-right: 1px solid #a4a4a4; }
.menubar { height: 27px; flex: none; border-top: 1px solid #fff; display: grid; grid-template-columns: 15px 57px 57px 58px 64px 58px 45px 85px 98px 52px 58px 74px 60px; align-items: center; white-space: nowrap; font-size: 12.5px; }
.menubar span { padding-bottom: 2px; letter-spacing: .1px; }
.menubar .grip { margin-left: 2px; }
.toolrow { height: 29px; flex: none; display: flex; border-top: 1px solid #a0a0a0; }
.toolrow.low { border-bottom: 2px solid #808080; }
.group { flex: none; display: flex; align-items: center; border-right: 1px solid #a0a0a0; border-top: 1px solid #fff; }
.group .grip { margin: 0 1px 0 4px; }
.group.first { width: 75px; }
.group.first .grip { margin: 0 2px; }
.g-model { width: 186px; }
.g-view { width: 192px; }
.g-tools { width: 98px; }
.g-hide { width: 275px; }
.group.r-sel { width: 158px; }
.r-wide { width: 274px; }
.r-pair { width: 54px; }
.r-planes { width: 78px; }
.group svg { width: 22px; height: 22px; padding: 2px; }
.low svg { margin-top: -1px; }
.group svg.on { background: #fafafa; border: 1px solid; border-color: #999 #fff #fff #999; padding: 1px; }
.sep { width: 1px; height: 24px; background: #a0a0a0; margin: 0 2px; }
.caret { border: 3px solid transparent; border-top-color: #000; border-bottom: 0; margin: 0 2px; width: 6px; }
.caret.dim { border-top-color: #999; margin: 0 4px 0 3px; }
.combo { width: 107px; height: 22px; border: 1px solid #f8f8f8; display: flex; align-items: center; justify-content: space-between; color: #777; padding-left: 2px; }

.work { display: flex; flex: 1; min-height: 0; }
.side { width: 68px; flex: none; padding-top: 10px; border-right: 1px solid #a0a0a0; overflow: hidden; background: linear-gradient(#a0a0a0, #a0a0a0) 2px 3px / 62px 1px no-repeat #f0f0f0; }
.item { height: 40px; display: flex; flex-direction: column; align-items: center; color: #777; line-height: 18px; text-align: center; white-space: nowrap; font-size: 12.5px; }
.item.tall { height: 58px; }
.item svg { width: 18px; height: 18px; }
.item span { margin-top: -2px; letter-spacing: -.1px; }
.item .long { letter-spacing: -.5px; }
.item.live { color: #111; }

.panel { width: 357px; flex: none; display: flex; flex-direction: column; font-family: "Noto Sans CJK JP", sans-serif; border-right: 1px solid #888; }
.panel-title { height: 21px; flex: none; width: 352px; background: #9ab4d1; display: flex; justify-content: space-between; align-items: center; padding: 0 2px 0 4px; }
.panel-title svg { width: 30px; height: 14px; }
.tree { margin: 5px 0 0 3px; height: 231px; width: 347px; border: 2px solid #707070; border-right-width: 1px; outline: 1px solid #fff; background: #f4f4f4; display: flex; flex-direction: column; flex: none; line-height: 14px; }
.row { display: grid; grid-template-columns: 43px 16px 102px 12px 25px 15px 1fr; height: 14px; flex: none; color: #6c6c6c; white-space: nowrap; }
.row > span { height: 14px; line-height: 11px; }
.row svg { width: 14px; height: 14px; display: block; }
.row .st { padding-left: 18px; }
.row .nm { padding-left: 5px; }
.row .tight { letter-spacing: -.45px; }
.row .cm { padding-left: 5px; }
.row.head { height: 12px; background: #bdc5d5; border-bottom: 1px solid #888; overflow: hidden; color: #888; }
.row.head > span { line-height: 12px; }
.head .nm, .head .cm, .head span:nth-child(4), .head span:nth-child(5), .head span:nth-child(6) { border-left: 1px solid #888; }
.head .cm { text-align: center; }
.row.head .nm { padding-left: 13px; letter-spacing: -.2px; }
.row.root > span:not(.st) { border-bottom: 2px solid #000; line-height: 11px; }
.root { font-weight: bold; letter-spacing: .2px; }
.sel > span:not(.st) { background: #a5caee; border-bottom: 1px solid #123a6c; }
.cur > span:nth-child(n+3) { background: #ffdfcd; }
.box { display: block; width: 11px; height: 11px; border: 1px solid #000; margin: 0 0 0 2px; background: linear-gradient(#000, #000) center / 7px 1px no-repeat #fff; flex: none; }
.box.plus { background: linear-gradient(#000, #000) center / 7px 1px no-repeat, linear-gradient(#000, #000) center / 1px 7px no-repeat, #fff; }
.hscroll { margin-top: auto; height: 16px; margin-bottom: 3px; background: #ececec; display: flex; align-items: center; padding: 0 6px; }
.la, .ra { border: 3px solid transparent; width: 6px; }
.la { border-left: 0; border-right: 4px solid #333; margin-right: 6px; }
.ra { border-right: 0; border-left: 4px solid #333; margin-left: auto; }
.thumb { width: 112px; height: 15px; border: 1px solid #999; border-radius: 2px; background: linear-gradient(#f4f4f4, #ddd 48%, #c8c8cc 52%, #ddd); display: flex; align-items: center; justify-content: center; gap: 1px; }
.thumb i { width: 2px; height: 6px; background: linear-gradient(90deg, #444, #aaa); }

.setup { position: relative; margin-top: 7px; height: 93px; width: 352px; flex: none; border-top: 2px solid #111; border-right: 3px double #777; border-bottom: 1px solid #999; padding: 5px 4px 0 6px; }
.choice { height: 54px; display: flex; border-bottom: 1px solid #a0a0a0; }
.pick.main { width: 142px; padding-left: 3px; }
.pick.sub { width: 190px; padding-left: 2px; }
.pick label { display: block; line-height: 18px; height: 17px; }
.value { display: flex; align-items: center; height: 28px; }
.value svg { width: 24px; height: 24px; }
.sub .value { letter-spacing: .3px; }
.value .caret { margin-left: auto; }
.actions { display: flex; padding: 0 0 0 9px; gap: 8.4px; }
.actions svg { width: 22px; height: 26px; padding: 2px; }
.actions .hover { width: 30px; margin: 0 -4px; border: 1px solid; border-color: #fff #888 #888 #fff; }
.pointer { position: absolute; left: 220px; top: 77px; width: 13px; height: 20px; z-index: 4; }
.tip { position: absolute; left: 214px; top: 99px; z-index: 3; width: 73px; height: 23px; border: 1px solid #767676; border-radius: 3px; background: linear-gradient(#fff, #e4e5f0); box-shadow: 3px 3px 3px #0006; color: #555; line-height: 20px; text-align: center; white-space: nowrap; }

.params { margin: 1px 0 0 3px; height: 160px; width: 347px; flex: none; border: 2px solid #666; border-right: 1px solid #888; display: flex; overflow: hidden; }
.grid { width: 325px; flex: none; }
.p { display: grid; grid-template-columns: 200px 1fr; height: 15px; background: #fff; border-bottom: 1px solid #a0a0a0; line-height: 14px; white-space: nowrap; }
.p > span { height: 14px; display: flex; align-items: center; }
.p > span:first-child { border-right: 1px solid #a0a0a0; }
.p > span:last-child { padding-left: 2px; }
.p.head { height: 12px; background: #ff8020; color: #fff; border: 0; overflow: hidden; }
.p.head > span { justify-content: center; height: 12px; }
.p strong { font-size: 13px; margin-left: 4px; }
.grp { background: #f0f0f0; color: #888; }
.grp strong { color: #111; }
.l0 { padding-left: 16px; }
.l1 { padding-left: 25px; color: #888; }
.l1 svg { width: 16px; height: 15px; }
.l1.ink { color: #111; }
.p .l2 { padding-left: 52px; }
.l2 svg { width: 10px; height: 12px; margin-right: 2px; }
.p > .num { justify-content: flex-end; font: 12px "Liberation Sans"; letter-spacing: .3px; }
.num em { width: 16px; text-align: center; color: #2060e0; font: italic 16px/14px "Liberation Serif"; }
.vscroll { width: 16px; margin-left: 1px; background: #ececec; }
.vscroll i { border: 4px solid transparent; border-top: 0; border-bottom: 4px solid #333; width: 8px; margin: 6px 4px; }
.vscroll div { height: 150px; border: 1px solid #999; border-radius: 2px; background: linear-gradient(90deg, #f4f4f4, #c8c8cc); }

.canvas { flex: 1; position: relative; background: #e4e4e4; border-left: 1px solid #666; }
.canvas h1 { position: absolute; display: flex; margin: 0; left: 295px; top: 14px; font: 400 28px/42px "Noto Sans CJK JP"; white-space: nowrap; color: #111; -webkit-text-stroke: .3px #111; }
.kanji { font-size: 29px; letter-spacing: 2px; }
.kana { margin-left: -3px; transform: scaleX(.855); transform-origin: left; }
.cad { width: 520px; height: 505px; display: block; }
.axis { font: 10px "Liberation Sans"; fill: #d81414; }
```
